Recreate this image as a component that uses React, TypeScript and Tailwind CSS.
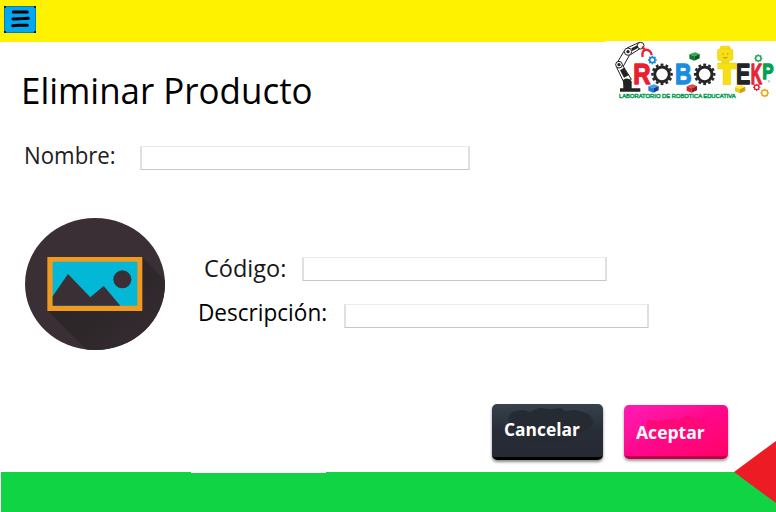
import React from "react";

const sans = "font-['Open_Sans','Noto_Sans',sans-serif]";

function Gear({ x, y, r, color, width, teeth = 10 }: { x: number; y: number; r: number; color: string; width: number; teeth?: number }) {
  return (
    <g transform={`translate(${x} ${y})`} fill="none" stroke={color}>
      <circle r={r} strokeWidth={width} />
      {Array.from({ length: teeth }, (_, i) => (
        <path key={i} d={`M0 ${-r - width / 2 + 1}v${-width * 0.75}`} strokeWidth={width * 0.95} transform={`rotate(${(i * 360) / teeth})`} />
      ))}
    </g>
  );
}

function Brick({ x, y, top, left, right }: { x: number; y: number; top: string; left: string; right: string }) {
  return (
    <g transform={`translate(${x} ${y})`}>
      <path d="M0 6 17 0 31 5 15 12Z" fill={top} />
      <path d="M0 6 15 12V25L0 19Z" fill={left} />
      <path d="M15 12 31 5V18L15 25Z" fill={right} />
      <ellipse cx="11" cy="5" rx="4" ry="2.5" fill={top} />
      <ellipse cx="20" cy="4" rx="4" ry="2.5" fill={top} />
    </g>
  );
}

function Letter({ x, y, w, size, color, children }: { x: number; y: number; w: number; size: number; color: string; children: string }) {
  return (
    <text x={x} y={y} textLength={w} lengthAdjust="spacingAndGlyphs" fontSize={size} fill={color} stroke={color} strokeWidth="4" strokeLinejoin="round" fontWeight="700" fontFamily="Liberation Sans, sans-serif">
      {children}
    </text>
  );
}

function Logo() {
  return (
    <svg viewBox="0 0 516 210" className="block h-[70px] w-[172px]">
      <path d="M0 210V25Q0 15 10 15H516V210Z" fill="#fff" />
      <g stroke="#222" strokeWidth="3" fill="#fff" strokeLinejoin="round">
        <path d="M36 86 61 44 80 51 56 94Z" />
        <path d="M69 36 106 19 114 34 78 57Z" />
        <path d="M38 94 54 85 82 130 61 142Z" />
        <circle cx="72" cy="47" r="11" />
        <circle cx="45" cy="86" r="10" />
        <circle cx="110" cy="29" r="10" />
      </g>
      <g fill="#222">
        <circle cx="72" cy="47" r="5" />
        <circle cx="45" cy="86" r="5" />
        <path d="M57 132Q73 122 83 136V157H109V167H48V157H58Z" />
        <path d="m48 103 12-8 14 23-14 7ZM82 37l18-9 3 7-18 10Z" />
      </g>
      <path d="m115 31 7 11M116 63Q112 44 126 41 140 42 143 57" fill="none" stroke="#e42532" strokeWidth="7" />
      <Gear x={145} y={72} r={8} width={5} color="#1687d9" teeth={8} />
      <Letter x={88} y={144} w={52} size={86} color="#e91f2f">R</Letter>
      <Gear x={174} y={115} r={22} width={9} color="#252525" teeth={12} />
      <Letter x={213} y={144} w={50} size={86} color="#198ee0">B</Letter>
      <Gear x={302} y={115} r={22} width={9} color="#252525" teeth={12} />
      <g fill="#f8df12" stroke="#ddbd13" strokeWidth="1">
        <rect x="349" y="30" width="29" height="12" rx="4" />
        <rect x="340" y="38" width="47" height="36" rx="8" />
        <path d="M353 74h22v7h-22Z" />
        <path d="M341 81H397V99H380V146H357V99H341Z" />
      </g>
      <path d="M355 54h4m10 0h4M358 65q6 3 12-1" stroke="#705e12" strokeWidth="2" fill="none" />
      <Letter x={396} y={144} w={43} size={86} color="#242424">E</Letter>
      <Gear x={463} y={67} r={8} width={4} color="#12a54b" teeth={8} />
      <Letter x={440} y={144} w={34} size={86} color="#e62534">K</Letter>
      <Letter x={475} y={130} w={34} size={64} color="#06a052">P</Letter>
      <text x="491" y="142" fill="#333" fontSize="9" fontFamily="Liberation Sans, sans-serif">®</text>
      <Brick x={256} y={49} top="#35ae4b" left="#087d31" right="#0b5728" />
      <Brick x={133} y={145} top="#3aa4ed" left="#1682de" right="#143f91" />
      <Brick x={248} y={145} top="#ec4444" left="#d51d2c" right="#8d1c22" />
      <Brick x={393} y={147} top="#ffed39" left="#ead014" right="#c9a413" />
      <Gear x={458} y={154} r={7} width={4} color="#e32533" teeth={8} />
      <Gear x={482} y={171} r={9} width={4} color="#efa318" teeth={8} />
      <text x="45" y="187" textLength="350" lengthAdjust="spacingAndGlyphs" fill="#079c50" stroke="#079c50" strokeWidth="1.4" fontSize="17.5" fontFamily="Liberation Sans, sans-serif">LABORATORIO DE ROBOTICA EDUCATIVA</text>
    </svg>
  );
}

function ProductImage() {
  return (
    <svg viewBox="0 0 420 396" className="block h-[132px] w-[140px] shrink-0">
      <defs>
        <clipPath id="disc"><ellipse cx="210" cy="198" rx="210" ry="198" /></clipPath>
        <linearGradient id="shade" x1="0" y1="0" x2="1" y2="1"><stop stopColor="#252222" /><stop offset="1" stopColor="#3b2f36" /></linearGradient>
      </defs>
      <g clipPath="url(#disc)">
        <path d="M0 0H420V396H0Z" fill="#3b2f36" />
        <path d="M68 278 352 118 480 246V500H290Z" fill="url(#shade)" />
      </g>
      <path d="M67 117H352V279H67Z" fill="#f29a1f" />
      <path d="M83 131H337V263H83Z" fill="#03b8d6" />
      <path d="M83 235 129 168 196 238 236 204 286 263H83Z" fill="#3b2f36" />
      <circle cx="292" cy="184" r="27" fill="#3b2f36" />
    </svg>
  );
}

function Field({ label, boxClass, textClass, inputClass }: { label: string; boxClass: string; textClass: string; inputClass: string }) {
  return (
    <label className="flex h-6 items-start">
      <span className={`block shrink-0 ${boxClass}`}>
        <span className={`block w-fit origin-left whitespace-nowrap text-[23.5px] leading-6 ${textClass}`}>{label}</span>
      </span>
      <input aria-label={label} className={`block h-6 shrink-0 border-x-2 border-t border-b border-x-[#e0e0e0] border-t-[#ebebeb] border-b-[#c6c6c6] bg-white px-2 outline-none ${inputClass}`} />
    </label>
  );
}

function CancelShade() {
  return (
    <svg viewBox="0 0 111 53" className="pointer-events-none absolute inset-0 h-[53px] w-[111px]">
      <path d="M17 18Q15 9 24 7L31 6 38 8 47 4 58 5 69 4 73 7 84 6 96 10Q106 18 98 24 91 29 81 28V39H30V29L18 24Z" fill="#262a33" />
    </svg>
  );
}

function AcceptShade() {
  return (
    <svg viewBox="0 0 104 51" className="pointer-events-none absolute inset-0 h-[51px] w-[104px]">
      <path d="M22 20Q23 13 34 16L45 14 55 15Q62 8 70 13L80 17 81 32 27 35Z" fill="#ff0878" />
    </svg>
  );
}

export default function App() {
  return (
    <div className={`flex h-[512px] w-[776px] flex-col overflow-hidden bg-white text-black ${sans}`}>
      <header className="flex h-[42px] shrink-0 items-start justify-between bg-[#fff200]">
        <button aria-label="Menú" className="mt-1.5 ml-1 block h-[27px] w-8">
          <svg viewBox="0 0 96 81" className="block h-full w-full">
            <path d="M0 0H96V81H0Z" fill="#087cae" />
            <path d="M3 3H93V78H3Z" fill="#00a8f3" />
            <path d="M0 0h6v5H0ZM90 0h6v5h-6ZM0 75h6v6H0ZM90 75h6v6h-6Z" fill="#111" />
            <path d="M28 18H70M27 39 46 38 73 37M26 59 45 58H70" stroke="#000" strokeWidth="9" strokeLinecap="round" />
          </svg>
        </button>
        <div className="mt-9"><Logo /></div>
      </header>
      <main className="flex h-[430px] shrink-0 flex-col">
        <h1 className="mt-[25px] ml-[21px] h-12 w-fit origin-left scale-x-[0.97] text-[36px] leading-[48px] font-normal whitespace-nowrap">Eliminar Producto</h1>
        <div className="mt-[31px] ml-6">
          <Field label="Nombre:" boxClass="w-[116px] -mt-[3px]" textClass="scale-x-[0.945] text-[#202020]" inputClass="w-[330px]" />
        </div>
        <section className="mt-12 ml-[25px] flex items-start">
          <ProductImage />
          <div className="mt-[39px] ml-[33px] flex flex-col gap-[23px]">
            <div className="ml-[6px]"><Field label="Código:" boxClass="w-[98px] -mt-px" textClass="text-[#171717]" inputClass="w-[305px]" /></div>
            <Field label="Descripción:" boxClass="w-[146px] -mt-[4px]" textClass="scale-x-[0.96]" inputClass="w-[305px]" />
          </div>
        </section>
        <div className="mt-[54px] ml-[492px] flex items-start gap-[21px] text-lg leading-6 font-bold text-white">
          <button className="relative h-14 w-[111px] rounded-[5px] border-b-[3px] border-black bg-linear-to-b from-[#37424c] via-[#272d37] to-[#262a35] pb-1 pl-3 text-left shadow-[0_2px_3px_#0007]">
            <CancelShade />
            <span className="relative block w-fit origin-left scale-x-[0.965]">Cancelar</span>
          </button>
          <button className="relative mt-px h-[54px] w-[104px] rounded-[5px] border-b-[3px] border-[#bf0048] bg-linear-to-br from-[#ff19b7] via-[#ff078b] to-[#ff0066] pt-0.5 pl-3 text-left shadow-[0_2px_3px_#0006]">
            <AcceptShade />
            <span className="relative block w-fit origin-left scale-x-[0.975]">Aceptar</span>
          </button>
        </div>
      </main>
      <footer className="flex h-10 shrink-0 items-start bg-[#11d445]">
        <div className="h-full w-px bg-white" />
        <div className="ml-[190px] h-px w-[135px] bg-white" />
        <svg viewBox="0 0 42 62" className="-mt-[31px] ml-auto block h-[62px] w-[42px] shrink-0"><path d="M0 31 42 0V62Z" fill="#ed1c24" /></svg>
      </footer>
    </div>
  );
}
